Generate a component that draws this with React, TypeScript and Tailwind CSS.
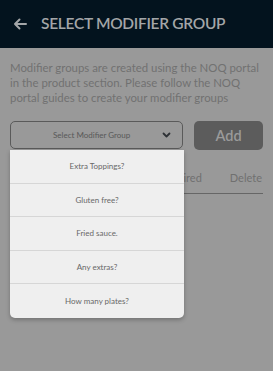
import React from 'react';

const groups = ['Extra Toppings?', 'Gluten free?', 'Fried sauce.', 'Any extras?', 'How many plates?'];

const App: React.FC = () => {
  return (
    <div className="h-[371px] w-[273px] overflow-hidden bg-[#999999] font-['Lato',sans-serif]">
      {/* Header */}
      <div className="flex h-[48px] items-center bg-[#03131e] pl-[13px]">
        <svg width="14" height="12" viewBox="0 0 14 12" fill="none" stroke="#a3a6a8" strokeWidth="2" strokeLinecap="round" strokeLinejoin="round">
          <path d="M13 6H2M6.5 1.5L2 6l4.5 4.5" />
        </svg>
        <h1 className="ml-[14px] text-[15.5px] font-semibold leading-none tracking-[-0.3px] text-[#a3a6a8]">SELECT MODIFIER GROUP</h1>
      </div>

      <div className="px-[10px] pt-[12px]">
        <p className="text-[11.4px] leading-[15px] text-[#717171]">
          Modifier groups are created using the NOQ portal in the product section. Please follow the NOQ portal guides to create your modifier groups
        </p>

        <div className="mt-[16px] flex gap-[11px]">
          <div className="relative w-[174px]">
            <div className="flex h-[28px] items-center rounded-[5px] border border-[#5a5a5a] pr-[11px]">
              <span className="flex-1 pl-[10px] text-center text-[8px] text-[#585858]">Select Modifier Group</span>
              <svg width="9" height="6" viewBox="0 0 9 6" fill="none" stroke="#2e3236" strokeWidth="1.8" strokeLinecap="round" strokeLinejoin="round">
                <path d="M1.5 1.5L4.5 4.5L7.5 1.5" />
              </svg>
            </div>
            <div className="absolute left-0 top-[29px] z-10 w-[174px] overflow-hidden rounded-b-[5px] bg-[#efefef] shadow-[0_2px_4px_rgba(0,0,0,0.25)]">
              {groups.map((g, i) => (
                <div
                  key={g}
                  className={`flex h-[33.5px] items-center justify-center text-[8px] text-[#686868] ${i < groups.length - 1 ? 'border-b-[1.5px] border-[#d6d6d6]' : ''}`}
                >
                  {g}
                </div>
              ))}
            </div>
          </div>
          <button className="h-[29px] w-[69px] rounded-[5px] bg-[#5c5c5c] text-[14.5px] font-semibold text-[#9a9a9a]">Add</button>
        </div>

        <div className="mt-[20px] flex justify-end border-b border-[#666666] pb-[6px] pr-[1px] text-[11px] text-[#707070]">
          <span className="mr-[28px]">Required</span>
          <span>Delete</span>
        </div>
      </div>
    </div>
  );
};

export default App;
